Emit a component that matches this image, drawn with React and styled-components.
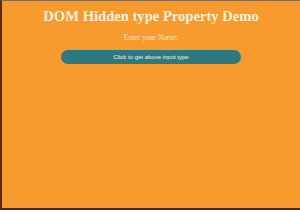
import React from "react";
import styled, { createGlobalStyle } from "styled-components";

const Global = createGlobalStyle`
  html, body {
    margin: 0;
    padding: 0;
    width: 300px;
    height: 210px;
    overflow: hidden;
    background: #f79b2e;
  }
`;

const View = styled.div`
  box-sizing: border-box;
  width: 300px;
  height: 210px;
  background: #f79b2e;
  border-top: 1px solid #8a6a4a;
  border-left: 2px solid #5a2a14;
  border-bottom: 2px solid #4a2a18;
  display: flex;
  flex-direction: column;
  align-items: center;
`;

const Title = styled.h1`
  margin: 6px 0 0;
  font-family: "Liberation Serif", serif;
  font-weight: bold;
  font-size: 14.6px;
  line-height: 18px;
  color: #fdf1dc;
`;

const Label = styled.p`
  margin: 8px 0 0;
  font-family: "Liberation Serif", serif;
  font-size: 7.6px;
  line-height: 10px;
  color: #fde4c0;
`;

const Button = styled.button`
  margin-top: 7px;
  width: 180px;
  height: 14px;
  padding: 0;
  border: none;
  border-radius: 7px;
  background: #2c7a80;
  color: #eef4f4;
  font-family: "Liberation Sans", sans-serif;
  font-size: 6px;
  line-height: 14px;
`;

export default function App() {
  return (
    <View>
      <Global />
      <Title>DOM Hidden type Property Demo</Title>
      <Label>Enter your Name:</Label>
      <Button>Click to get above input type</Button>
    </View>
  );
}
